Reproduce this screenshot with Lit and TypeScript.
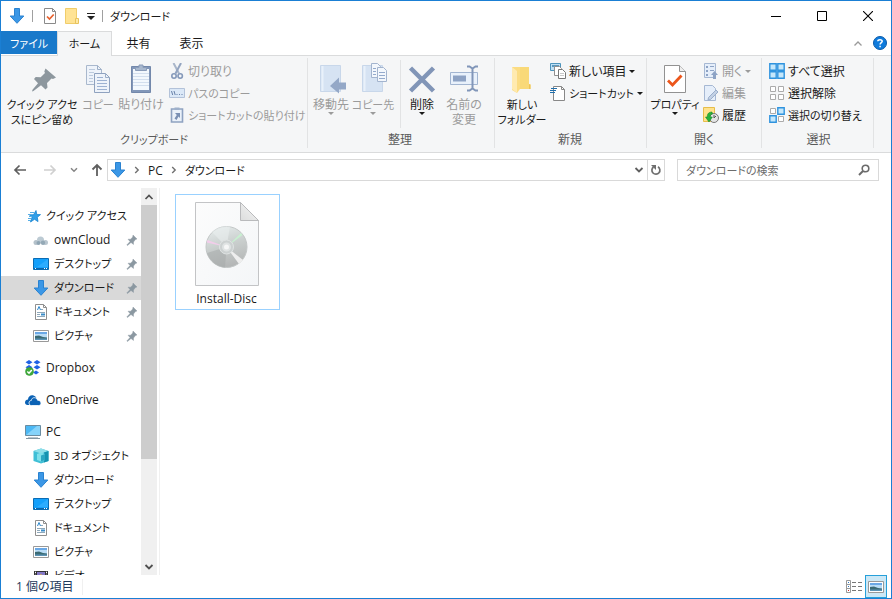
import { LitElement, html, css, svg, nothing, TemplateResult } from "lit";
import { customElement, property, state } from "lit/decorators.js";
import { classMap } from "lit/directives/class-map.js";
import { styleMap } from "lit/directives/style-map.js";

interface Glyph {
  w: number;
  h: number;
  body: TemplateResult;
}

const g = (w: number, h: number, body: TemplateResult): Glyph => ({ w, h, body });

const ICONS: Record<string, Glyph> = {
  down: g(16, 16, svg`<path d="M5.500.5h5v7.500h4.300L8 15.300 1.200 8h4.300z" fill="#3b97e6" stroke="#2a82d0"/>`),
  checkdoc: g(14, 16, svg`<path d="M1.500.5h8l3 3v12h-11z" fill="#fff" stroke="#8a8a8a"/><path d="M9.500.5v3h3" fill="none" stroke="#8a8a8a"/><path d="M4 8.500l2.500 2.500 4.200-4.500" fill="none" stroke="#e8602c" stroke-width="1.700"/>`),
  folder: g(14, 16, svg`<path d="M.5.5h11v10h1v5H.5z" fill="#ffe394" stroke="#f0cd6a"/><path d="M10.500 15.500v-5h3v5z" fill="#ffe9a6" stroke="#e8c35c"/>`),
  qat: g(8, 8, svg`<path d="M0 1h8v1H0zM0 4h8L4 8z" fill="#222"/>`),
  minimize: g(10, 10, svg`<path d="M0 5.500h10" stroke="#000"/>`),
  maximize: g(10, 10, svg`<path d="M.5.5h9v9h-9z" fill="none" stroke="#000"/>`),
  close: g(10, 10, svg`<path d="M0 0l10 10M10 0L0 10" stroke="#000" stroke-width="1.100"/>`),
  collapse: g(8, 5, svg`<path d="M.5 4.500L4 1l3.500 3.500" fill="none" stroke="#9a9a9a" stroke-width="1.300"/>`),
  help: g(14, 14, svg`<circle cx="7" cy="7" r="6.500" fill="#0f7bdc" stroke="#0b5aa8"/><path d="M4.800 5.300C4.900 3.300 9.200 3.200 9.200 5.300 9.200 6.600 7.100 6.800 7.100 8.500M7.100 9.700v1.600" fill="none" stroke="#fff" stroke-width="1.500"/>`),
  caret: g(6, 3, svg`<path d="M0 0h6L3 3z" fill="currentColor"/>`),
  pinBig: g(32, 32, svg`<path d="M20.500 4.500L31 13.500l-3 1.500-1.500-.5-4.500 4.500.5 4.500-2 2-4.500-4.300L8.500 27l-1.500.5.500-1.700 5.500-6.600L9 15l1.700-2 5 .3L20 9l-.7-1.500z" transform="translate(-1 1)" fill="#8d979e"/>`),
  copyBig: g(32, 32, svg`<g stroke="#a9b8cd" fill="#eef3fa"><path d="M4.500 2.500h11l4 4v15h-15z"/><path d="M12.500 10.500h11l4 4v15h-15z" stroke="#8fa2bf"/></g><path d="M15.500 2.500v4h4M23.500 10.500v4h4" fill="none" stroke="#9dafc8"/><path d="M7 6.500h6M7 9.500h5M7 12.500h4M7 15.500h4M7 18.500h4" stroke="#bccadd"/><path d="M15 14.500h6M15 17.500h10M15 20.500h10M15 23.500h10M15 26.500h10" stroke="#9db2d2"/>`),
  pasteBig: g(32, 32, svg`<path d="M6.500 3.500h19v26h-19z" fill="#8297b9" stroke="#7388ab"/><path d="M8 6h16v21H8z" fill="#f3f8fd"/><path d="M8 10.500h16M8 13.500h16M8 16.500h16M8 19.500h16M8 22.500h16" stroke="#d3dfee"/><path d="M10.500 7.500v-3h3.500V2h4v2.500h3.500v3z" fill="#a8b8ce" stroke="#8a9cb9"/>`),
  cut: g(16, 16, svg`<path d="M4.500 0L10 10.500" stroke="#a9b6ca" stroke-width="2"/><path d="M12 0L6.500 10.500" stroke="#93a4c0" stroke-width="2"/><circle cx="5" cy="13" r="2.200" fill="none" stroke="#8498b9" stroke-width="1.600"/><circle cx="11.200" cy="13" r="2.200" fill="none" stroke="#8498b9" stroke-width="1.600"/>`),
  path: g(16, 16, svg`<path d="M.5 3.500h15v9H.5z" fill="#dbe8f7" stroke="#b3c2d9"/><path d="M2.500 6l1.200 4M5 6l1.200 4" stroke="#6780a8"/><path d="M7.500 9h1v1h-1zM10 9h1v1h-1zM12.500 9h1v1h-1z" fill="#6780a8"/>`),
  pasteLink: g(16, 16, svg`<path d="M2.500 2h11v13h-11z" fill="#eaf1fa" stroke="#8ea2c1" stroke-width="1.600"/><path d="M5.500.5h5V3h-5z" fill="#9eb0ca"/><path d="M6 6h5v5L9.500 9.500 7.500 13 5.500 11.500 7.800 8z" fill="#7a90b4"/>`),
  moveBig: g(32, 32, svg`<path d="M5.500 2.500h20v26h-20z" fill="#d6e3f3" stroke="#c8d7ea"/><path d="M7.500 3v25" stroke="#e9f1fa" stroke-width="2"/><path d="M24 14.500l-9 8.500 9 7.500V26.500h7v-7h-7z" fill="#94a8c7"/>`),
  copyToBig: g(32, 32, svg`<path d="M5.500 2.500h20v26h-20z" fill="#d6e3f3" stroke="#c8d7ea"/><path d="M7.500 3v25" stroke="#e9f1fa" stroke-width="2"/><g fill="#f3f7fc" stroke="#a3b4ce"><path d="M14.500.5h6l3 3v11h-9z"/><path d="M20.500 4.500h6l3 3v11h-9z"/></g><path d="M16 5.500h3M16 8.500h3M16 11.500h3M22 9.500h6M22 12.500h6M22 15.500h6" stroke="#94aacc"/>`),
  deleteBig: g(32, 32, svg`<path d="M4.500 5l23 23M27.500 5l-23 23" stroke="#8195b7" stroke-width="4.500"/>`),
  renameBig: g(32, 32, svg`<path d="M2.500 9.500h27v12h-27z" fill="#e9f1fb" stroke="#a2b5d1"/><path d="M5 12.500h13v6H5z" fill="#8da2c4"/><path d="M19 3.500h2.500l3 2 3-2H30M24.500 5v21M19 27.500h2.500l3-2 3 2H30" fill="none" stroke="#8196b9" stroke-width="2"/>`),
  newFolderBig: g(32, 32, svg`<path d="M9 4h14v17h1.500v5H9z" fill="#f9d978"/><path d="M6 4h8v22l-3 4-5-3z" fill="#fbdc83"/><path d="M6 4l5 4v22l-5-4z" fill="#ffeab0"/><path d="M23 21l1.500 1v4H23z" fill="#edc356"/>`),
  newItem: g(16, 16, svg`<path d="M.5.5h10v7H.5z" fill="#bfe0f5" stroke="#4d94bd"/><path d="M2 2h7v2H2z" fill="#5b99bf"/><path d="M4.500 3.500h5l2 2v7h-7z" fill="#fff" stroke="#909090"/><path d="M8.500 6.500h4l3 3v6h-7z" fill="#fff" stroke="#777"/><path d="M10 10.500h4M10 12.500h4" stroke="#c9c9c9"/>`),
  shortcut: g(16, 16, svg`<path d="M3.500 1.500h8l3 3v11h-11z" fill="#fff" stroke="#888"/><path d="M11.500 1.500v3h3" fill="none" stroke="#888"/><path d="M1 3.500h6M0 5.500h6M0 7.500h5" stroke="#2170ad"/>`),
  propsBig: g(32, 32, svg`<path d="M5.500 2.500h15l6 6v21h-21z" fill="#fff" stroke="#929292"/><path d="M20.500 2.500v6h6" fill="#eee" stroke="#929292"/><path d="M9 17.500l4.500 4.500 9-9.500" fill="none" stroke="#ec561b" stroke-width="2.800"/>`),
  openSm: g(16, 16, svg`<path d="M1.500.5h11v14h-11z" fill="#e5eefa" stroke="#a6b8d3"/><path d="M3 3h2v2H3zM3 7h2v2H3zM3 11h2v2H3zM7 3h4v1H7zM7 7h4v1H7z" fill="#8da3c5"/><path d="M11.500 8l3.500 4h-2v4h-3v-4H8z" fill="#8da3c5"/>`),
  editSm: g(16, 16, svg`<path d="M1.500.5h8l3 3v12h-11z" fill="#e5eefa" stroke="#a6b8d3"/><path d="M13 5l2 2-7.500 7.500-2.500.5.500-2.500z" fill="#c2d0e4" stroke="#9aaecb"/>`),
  history: g(16, 16, svg`<path d="M.5.5h11v14H.5z" fill="#ffe28c" stroke="#e6bd4a"/><circle cx="11" cy="11" r="4.500" fill="#e4e4e4" stroke="#777"/><path d="M11 8v3l2-2" fill="none" stroke="#555"/><path d="M9 5C5 5 4 8 4.500 10H2.500l3.500 5 3.300-5H7.300C7 8 8 7 9.500 7z" fill="#27b43a" stroke="#168526" stroke-width=".6"/>`),
  selAll: g(16, 16, svg`<path d="M.8.8h6.400v6.400H.8zM8.800.8h6.400v6.400H8.800zM.8 8.800h6.400v6.400H.8zM8.800 8.800h6.400v6.400H8.800z" fill="#c5e7fb" stroke="#2f93de" stroke-width="1.400"/>`),
  selNone: g(16, 16, svg`<path d="M1.500 1.500h5v5h-5zM9.500 1.500h5v5h-5zM1.500 9.500h5v5h-5zM9.500 9.500h5v5h-5z" fill="#fff" stroke="#ababab"/>`),
  selInv: g(16, 16, svg`<path d="M8.800.8h6.400v6.400H8.800zM.8 8.800h6.400v6.400H.8z" fill="#c5e7fb" stroke="#2f93de" stroke-width="1.400"/><path d="M1.500 1.500h5v5h-5zM9.500 9.500h5v5h-5z" fill="#fff" stroke="#ababab"/>`),
  back: g(14, 12, svg`<path d="M13 6H2M6.500 1.500L2 6l4.500 4.500" fill="none" stroke="currentColor" stroke-width="1.700"/>`),
  forward: g(14, 12, svg`<path d="M1 6h11M7.500 1.500L12 6l-4.500 4.500" fill="none" stroke="currentColor" stroke-width="1.700"/>`),
  up: g(12, 14, svg`<path d="M6 13V2M1.500 6.500L6 2l4.500 4.500" fill="none" stroke="currentColor" stroke-width="1.800"/>`),
  chevDown: g(8, 6, svg`<path d="M1 1.200l3 3 3-3" fill="none" stroke="#858585" stroke-width="1.500"/>`),
  chevRight: g(6, 8, svg`<path d="M1.200 1l3 3-3 3" fill="none" stroke="#707070" stroke-width="1.400"/>`),
  chevUpBig: g(10, 6, svg`<path d="M1.500 5L5 1.500 8.500 5" fill="none" stroke="currentColor" stroke-width="1.700"/>`),
  chevDownBig: g(10, 6, svg`<path d="M1.500 1L5 4.500 8.500 1" fill="none" stroke="currentColor" stroke-width="1.800"/>`),
  refresh: g(12, 12, svg`<path d="M8 2.800A4 4 0 1 1 3.500 3" fill="none" stroke="#6f6f6f" stroke-width="1.700"/><path d="M1 1h5v5z" fill="#6f6f6f"/>`),
  search: g(12, 12, svg`<circle cx="7.500" cy="4.500" r="3.300" fill="none" stroke="#6b6b6b" stroke-width="1.600"/><path d="M5 7L1 11" stroke="#6b6b6b" stroke-width="2"/>`),
  star: g(16, 16, svg`<path d="M11 2.500l.8 4.100h3.700l-3.200 2.700.7 4.300L9.500 11.300 5.500 14l1.500-4.500L4.500 6.800h4z" fill="#2f9fe9" stroke="#1583cf" stroke-width=".8"/><path d="M5 4.500h4M3 6.500h3M4 8.500h3M3 10.500h3M3 12.500h3" stroke="#56aee6"/>`),
  cloud: g(16, 16, svg`<circle cx="3" cy="10.500" r="2.500" fill="#b4c1ca"/><circle cx="7.500" cy="8" r="3.500" fill="#bccad3"/><circle cx="12.500" cy="10.500" r="2.500" fill="#b9c6cf"/><circle cx="5.500" cy="11" r="2" fill="#8fa5b3"/><circle cx="10" cy="10.800" r="2.200" fill="#94a9b6"/>`),
  desktop: g(16, 16, svg`<path d="M.5 2.500h15v11H.5z" fill="#14a0fb" stroke="#0a6cb4"/><path d="M4 11L15 3v8z" fill="#2cacff"/><path d="M1 12h14v1H1z" fill="#0b66ad"/><path d="M2 12h1v1H2zM11 12h1v1h-1zM13 12h1v1h-1z" fill="#fff"/>`),
  doc: g(16, 16, svg`<path d="M2.500.5h8l3 3v12h-11z" fill="#fff" stroke="#8f8f8f"/><path d="M10.500.5v3h3" fill="none" stroke="#8f8f8f"/><path d="M4.500 6l1.500-3.500L7.500 6" fill="none" stroke="#2a86cc"/><path d="M8 5.500h2M4 8.500h8M4 10.500h3M4 12.500h8" stroke="#8fa8ba"/><path d="M8 9.500h4v2H8z" fill="#3a8cc8"/>`),
  picture: g(16, 16, svg`<path d="M.5 2.500h15v11H.5z" fill="#fff" stroke="#999"/><path d="M2 4h12v8H2z" fill="#b9dcf6"/><path d="M2 4h12v2H2z" fill="#6aa8e6"/><path d="M2 8l4-.5L10 9l4 .5V12H2z" fill="#3b6b74"/><path d="M2 10.500h12V12H2z" fill="#5b93b4"/>`),
  dropbox: g(16, 16, svg`<path d="M4 0l3.500 2.300L4 4.600.5 2.300zM12 0l3.500 2.300L12 4.600 8.500 2.300zM4 5l3.500 2.300L4 9.600.5 7.300zM12 5l3.500 2.300L12 9.600 8.500 7.300zM11 10.500l3 2-3 2-3-2z" fill="#1f62e6"/><circle cx="4.500" cy="11.500" r="4" fill="#3fab3b" stroke="#3a9a38" stroke-width=".6"/><path d="M2.300 11.500l1.700 1.700 2.800-3.200" fill="none" stroke="#fff" stroke-width="1.500"/>`),
  onedrive: g(16, 16, svg`<path d="M0 10.500C0 8.500 1.500 7.500 3 7.500 3 4.500 6 2.500 8.500 3.500 10 4 11 5 11.300 6L6 13H2.500C1 13 0 12 0 10.500z" fill="#0b62b5"/><path d="M4 11c0-1.500 1-2.500 2.300-2.500C6.500 6.500 8 5.500 9.800 5.700c1.500.2 2.500 1.300 2.700 2.500 2 0 3.500 1 3.500 3 0 1.300-1 2.300-2.500 2.300H6.300C5 13.500 4 12.500 4 11z" fill="#0b62b5" stroke="#fff" stroke-width=".8"/>`),
  pc: g(16, 16, svg`<path d="M.5 1.500h15v10H.5z" fill="#4cb8f4" stroke="#6a8ca1"/><path d="M1 11L12 2h3v9z" fill="#86d3fa"/><path d="M1 14.500h14" stroke="#8496a2"/><path d="M3 13.500h10" stroke="#b9c6ce"/>`),
  cube: g(16, 16, svg`<path d="M.5 3L8 .5 15.500 3v10L8 15.500.5 13z" fill="#3fbfd6"/><path d="M.5 3L8 .5 15.500 3 8 5.500z" fill="#8fdfe9"/><path d="M11 4.500L15.500 3v10L11 14.500z" fill="#1593b0"/><path d="M4 6l4-1.500L12 6v6l-4 1.500L4 12z" fill="#7fe0ea"/><path d="M8 7.500L12 6v6l-4 1.500z" fill="#2ba7c2"/>`),
  video: g(16, 16, svg`<path d="M1 3h14v12H1z" fill="#333"/><path d="M4 4h8v9H4z" fill="#8579c6"/><path d="M4 9l4-3 4 4v3H4z" fill="#e4b73e"/><path d="M2 4.500h1M2 7.500h1M2 10.500h1M13 4.500h1M13 7.500h1M13 10.500h1" stroke="#fff" stroke-width="1.500"/>`),
  pin: g(12, 12, svg`<path d="M7 1l4 4-1.500.5L7.500 8v2.500L5 8.500 1.500 11.500.8 11 4 7.500 2 5.200h2.600L6.700 3z" fill="#8b98a1" stroke="#8b98a1" stroke-width=".4"/>`),
  disc: g(64, 84, svg`
    <defs>
      <linearGradient id="paper" x1="0" y1="0" x2="1" y2="1"><stop offset="0" stop-color="#fcfcfc"/><stop offset="1" stop-color="#f4f6f8"/></linearGradient>
      <linearGradient id="fold" x1="0" y1="1" x2="1" y2="0"><stop offset="0" stop-color="#dcdddd"/><stop offset="1" stop-color="#f6f6f6"/></linearGradient>
      <linearGradient id="plate" x1=".2" y1="0" x2=".5" y2="1"><stop offset="0" stop-color="#e6ecec"/><stop offset=".5" stop-color="#c9cecd"/><stop offset="1" stop-color="#b4b6b6"/></linearGradient>
    </defs>
    <path d="M.5.5h45l18 18v65H.5z" fill="url(#paper)" stroke="#c3c4c6"/>
    <path d="M45.500.5v18h18z" fill="url(#fold)" stroke="#b9babc"/>
    <circle cx="31.500" cy="45" r="20.500" fill="url(#plate)" stroke="#c3c7c7"/>
    <path d="M31.500 45L17 30a21 21 0 0 1 18-5.500z" fill="#e9efee" opacity=".6"/>
    <path d="M31.500 45L46 31l1.500 2z" fill="#c8f0d0"/>
    <path d="M31.500 45L44 62l4-4z" fill="#eeeeee"/>
    <path d="M31.500 45L12.500 38l-.8 2.500z" fill="#f2cdea"/>
    <path d="M31.500 45L12 51a20.500 20.500 0 0 0 18 14.500z" fill="#a3a7a7" opacity=".5"/>
    <circle cx="31.500" cy="45" r="7" fill="#ccd1d1" stroke="#dfe3e3"/>
    <circle cx="31.500" cy="45" r="3.500" fill="#f6f7f7" stroke="#dfe3e3" stroke-width="2"/>`),
  details: g(16, 14, svg`<path d="M.5.5h4v4h-4zM.5 4.500h4v4h-4zM.5 8.500h4v4h-4z" fill="#fff" stroke="#999"/><path d="M2 2h1v1H2zM2 6h1v1H2z" fill="#2a78c4"/><path d="M2 10h1v1H2z" fill="#d42a2a"/><path d="M6 2.500h4M12 2.500h4M6 6.500h4M12 6.500h4M6 10.500h4M12 10.500h4" stroke="#777"/>`),
};

const icon = (name: string) => {
  const i = ICONS[name];
  return html`<svg class="icon" width=${i.w} height=${i.h} viewBox="0 0 ${i.w} ${i.h}" aria-hidden="true">${i.body}</svg>`;
};

interface Command {
  icon: string;
  lines: string[];
  size?: "xs" | "md" | "lg" | "xl";
  off?: boolean;
  menu?: boolean;
}

interface Group {
  id: string;
  label: string;
  large: Command[][];
  small: Command[];
}

const GROUPS: Group[] = [
  {
    id: "clipboard",
    label: "クリップボード",
    large: [[
      { icon: "pinBig", lines: ["クイック アクセ", "スにピン留め"], size: "xl" },
      { icon: "copyBig", lines: ["コピー"], off: true, size: "xs" },
      { icon: "pasteBig", lines: ["貼り付け"], off: true, size: "lg" },
    ]],
    small: [
      { icon: "cut", lines: ["切り取り"], off: true },
      { icon: "path", lines: ["パスのコピー"], off: true },
      { icon: "pasteLink", lines: ["ショートカットの貼り付け"], off: true },
    ],
  },
  {
    id: "organize",
    label: "整理",
    large: [
      [
        { icon: "moveBig", lines: ["移動先"], off: true, menu: true },
        { icon: "copyToBig", lines: ["コピー先"], off: true, menu: true },
      ],
      [
        { icon: "deleteBig", lines: ["削除"], menu: true },
        { icon: "renameBig", lines: ["名前の", "変更"], off: true },
      ],
    ],
    small: [],
  },
  {
    id: "create",
    label: "新規",
    large: [[{ icon: "newFolderBig", lines: ["新しい", "フォルダー"], size: "lg" }]],
    small: [
      { icon: "newItem", lines: ["新しい項目"], menu: true },
      { icon: "shortcut", lines: ["ショートカット"], menu: true },
    ],
  },
  {
    id: "open",
    label: "開く",
    large: [[{ icon: "propsBig", lines: ["プロパティ"], menu: true, size: "lg" }]],
    small: [
      { icon: "openSm", lines: ["開く"], off: true, menu: true },
      { icon: "editSm", lines: ["編集"], off: true },
      { icon: "history", lines: ["履歴"] },
    ],
  },
  {
    id: "select",
    label: "選択",
    large: [],
    small: [
      { icon: "selAll", lines: ["すべて選択"] },
      { icon: "selNone", lines: ["選択解除"] },
      { icon: "selInv", lines: ["選択の切り替え"] },
    ],
  },
];

interface Place {
  icon: string;
  name: string;
  pinned?: boolean;
  current?: boolean;
}

const PLACES: { root: Place; children: Place[] }[] = [
  {
    root: { icon: "star", name: "クイック アクセス" },
    children: [
      { icon: "cloud", name: "ownCloud", pinned: true },
      { icon: "desktop", name: "デスクトップ", pinned: true },
      { icon: "down", name: "ダウンロード", pinned: true, current: true },
      { icon: "doc", name: "ドキュメント", pinned: true },
      { icon: "picture", name: "ピクチャ", pinned: true },
    ],
  },
  { root: { icon: "dropbox", name: "Dropbox" }, children: [] },
  { root: { icon: "onedrive", name: "OneDrive" }, children: [] },
  {
    root: { icon: "pc", name: "PC" },
    children: [
      { icon: "cube", name: "3D オブジェクト" },
      { icon: "down", name: "ダウンロード" },
      { icon: "desktop", name: "デスクトップ" },
      { icon: "doc", name: "ドキュメント" },
      { icon: "picture", name: "ピクチャ" },
      { icon: "video", name: "ビデオ" },
    ],
  },
];

const kana = (s: string) => /[ァ-ヶ]{2}|の切/.test(s);

const base = css`
  * {
    box-sizing: border-box;
  }
  button,
  input {
    font: inherit;
    font-feature-settings: inherit;
    color: inherit;
    background: none;
    border: 0;
    padding: 0;
    margin: 0;
    white-space: nowrap;
  }
  a {
    color: inherit;
    text-decoration: none;
  }
  .icon {
    display: block;
    flex: none;
  }
  .kana {
    font-size: 11px;
  }
`;

@customElement("ribbon-bar")
export class RibbonBar extends LitElement {
  static styles = [
    base,
    css`
      :host {
        display: flex;
        flex: none;
        background: #f5f6f7;
        border-top: 1px solid #dadbdc;
        border-bottom: 1px solid #dadbdc;
        overflow: hidden;
      }
      .group {
        display: flex;
        flex-direction: column;
        flex: none;
        padding: 2px 4px 0;
        border-right: 1px solid #e2e3e4;
        margin: 2px 0 4px;
      }
      .clipboard { width: 307px; }
      .organize { width: 187px; padding-left: 2px; }
      .create { width: 152px; padding-left: 3px; }
      .open { width: 115px; }
      .select { width: 112px; padding-left: 6px; }
      .commands {
        display: flex;
        height: 72px;
      }
      .set {
        display: flex;
        margin-bottom: 4px;
      }
      .set + .set {
        border-left: 1px solid #e2e3e4;
        margin-left: 6px;
      }
      .large {
        display: flex;
        flex-direction: column;
        align-items: center;
        width: 42px;
        padding-top: 3px;
        line-height: 15px;
      }
      .xs { width: 38px; }
      .lg { width: 48px; }
      .xl { width: 74px; }
      .large .text {
        padding-top: 2px;
        text-align: center;
      }
      .small {
        display: flex;
        flex-direction: column;
        padding-left: 4px;
      }
      .select .small { padding-left: 1px; }
      .row {
        display: flex;
        align-items: center;
        gap: 3px;
        height: 22px;
      }
      .off {
        color: #9b9b9b;
      }
      .label {
        margin: 0;
        font-weight: normal;
        font-size: 12px;
        line-height: 16px;
        text-align: center;
        color: #5a5a5a;
      }
      .label.kana {
        font-size: 11px;
      }
    `,
  ];

  private large(c: Command) {
    return html`<button
      class="large ${c.size ?? "md"} ${c.off ? "off" : ""}"
      ?disabled=${!!c.off}
    >
      ${icon(c.icon)}
      <span class=${classMap({ text: true, kana: kana(c.lines.join("")) })}
        >${c.lines.map((l, i) => html`${i ? html`<br />` : nothing}${l}`)}</span
      >
      ${c.menu ? icon("caret") : nothing}
    </button>`;
  }

  private small(c: Command) {
    return html`<button class=${classMap({ row: true, off: !!c.off })} ?disabled=${!!c.off}>
      ${icon(c.icon)}<span class=${classMap({ kana: kana(c.lines[0]) })}>${c.lines[0]}</span>
      ${c.menu ? icon("caret") : nothing}
    </button>`;
  }

  render() {
    return GROUPS.map(
      (grp) => html`<section class="group ${grp.id}" aria-label=${grp.label}>
        <div class="commands">
          ${grp.large.map((s) => html`<div class="set">${s.map((c) => this.large(c))}</div>`)}
          ${grp.small.length
            ? html`<div class="small">${grp.small.map((c) => this.small(c))}</div>`
            : nothing}
        </div>
        <h2 class=${classMap({ label: true, kana: kana(grp.label) })}>${grp.label}</h2>
      </section>`
    );
  }
}

@customElement("nav-pane")
export class NavPane extends LitElement {
  @property({ type: Number }) visible = 0.72;

  static styles = [
    base,
    css`
      :host {
        display: flex;
        flex: none;
        width: 159px;
        min-height: 0;
        border-right: 1px solid #f0f0f0;
      }
      .tree {
        flex: 1;
        min-width: 0;
        overflow: hidden;
        padding-top: 16px;
      }
      ul {
        list-style: none;
        margin: 0 0 8px;
        padding: 0;
      }
      .place {
        display: flex;
        align-items: center;
        gap: 5px;
        height: 24px;
        padding: 0 3px 0 32px;
      }
      .root {
        padding-left: 24px;
      }
      .current {
        background: #d9d9d9;
      }
      .name {
        flex: 1;
        line-height: 16px;
        padding-bottom: 1px;
        white-space: nowrap;
      }
      .scroll {
        flex: none;
        display: flex;
        flex-direction: column;
        width: 16px;
        margin-right: 2px;
        background: #f0f0f0;
        color: #505050;
      }
      .step {
        display: flex;
        align-items: center;
        justify-content: center;
        height: 17px;
        flex: none;
      }
      .track {
        flex: 1;
        min-height: 0;
      }
      .thumb {
        background: #cdcdcd;
      }
    `,
  ];

  private place(p: Place, root = false) {
    return html`<li>
      <a class=${classMap({ place: true, root, current: !!p.current })} href="#">
        ${icon(p.icon)}<span class=${classMap({ name: true, kana: kana(p.name) })}>${p.name}</span>
        ${p.pinned ? icon("pin") : nothing}
      </a>
    </li>`;
  }

  render() {
    return html`
      <nav class="tree">
        ${PLACES.map(
          (s) => html`<ul>
            ${this.place(s.root, true)}${s.children.map((c) => this.place(c))}
          </ul>`
        )}
      </nav>
      <div class="scroll">
        <button class="step" aria-label="上へ">${icon("chevUpBig")}</button>
        <div class="track">
          <div class="thumb" style=${styleMap({ height: `${this.visible * 100}%` })}></div>
        </div>
        <button class="step" aria-label="下へ">${icon("chevDownBig")}</button>
      </div>
    `;
  }
}

@customElement("app-root")
export class AppRoot extends LitElement {
  @state() private query = "";

  static styles = [
    base,
    css`
      :host {
        display: flex;
        flex-direction: column;
        height: 100vh;
        box-sizing: border-box;
        border: 1px solid #1a7fd4;
        background: #fff;
        color: #1a1a1a;
        font: 12px "Open Sans", "Noto Sans CJK JP", sans-serif;
        font-feature-settings: "palt";
        overflow: hidden;
      }
      .titlebar {
        display: flex;
        align-items: center;
        height: 30px;
        flex: none;
        padding-left: 8px;
      }
      .bar {
        width: 1px;
        height: 12px;
        margin: 0 7px;
        background: #a0a0a0;
      }
      .quick {
        display: flex;
        align-items: center;
        gap: 8px;
        padding-left: 3px;
      }
      .title {
        flex: 1;
        margin: 0;
        font-weight: normal;
      }
      .win {
        display: flex;
        align-items: center;
        justify-content: center;
        width: 46px;
        height: 28px;
      }
      .tabs {
        display: flex;
        height: 24px;
        flex: none;
      }
      .tab {
        width: 53px;
        height: 23px;
        text-align: center;
      }
      .file {
        width: 56px;
        color: #fff;
        background: #1979ca;
      }
      .home {
        position: relative;
        width: 55px;
        height: 25px;
        padding-bottom: 2px;
        background: #f5f6f7;
        border: 1px solid #dadbdc;
        border-bottom: 0;
      }
      .tools {
        display: flex;
        align-items: center;
        gap: 11px;
        margin-left: auto;
        padding-right: 4px;
      }
      .address-row {
        display: flex;
        align-items: center;
        height: 34px;
        margin-bottom: 1px;
        flex: none;
        padding: 0 12px;
        color: #5f5f5f;
      }
      .history {
        display: flex;
        align-items: center;
        width: 94px;
        gap: 13px;
      }
      .history .fwd {
        color: #d0d0d0;
        padding-left: 3px;
      }
      .address {
        display: flex;
        flex: 1;
        align-items: center;
        height: 22px;
        border: 1px solid #d9d9d9;
        padding-left: 2px;
      }
      .crumbs {
        display: flex;
        flex: 1;
        align-items: center;
        gap: 8px;
      }
      .crumb {
        color: #1a1a1a;
      }
      .refresh {
        display: flex;
        align-items: center;
        justify-content: center;
        width: 17px;
        height: 20px;
        margin-left: 3px;
        border-left: 1px solid #d9d9d9;
      }
      .search {
        display: flex;
        align-items: center;
        flex: 0 1 202px;
        height: 22px;
        margin-left: 12px;
        padding: 0 8px;
        border: 1px solid #d9d9d9;
      }
      .search input {
        flex: 1;
        min-width: 0;
        outline: 0;
      }
      .search input::placeholder {
        color: #6d6d6d;
        opacity: 1;
      }
      .body {
        display: flex;
        flex: 1;
        min-height: 0;
      }
      .files {
        flex: 1;
        padding: 6px 15px;
      }
      .tile {
        display: flex;
        flex-direction: column;
        align-items: center;
        gap: 4px;
        width: 105px;
        padding: 7px 2px 1px 0;
        border: 1px solid #99d1ff;
        line-height: 18px;
      }
      .status {
        display: flex;
        align-items: center;
        height: 23px;
        flex: none;
        padding: 0 4px 0 15px;
        color: #1e395b;
      }
      .count {
        padding-right: 8px;
        border-right: 1px solid #f0f0f0;
        line-height: 16px;
      }
      .views {
        display: flex;
        margin-left: auto;
      }
      .view {
        display: flex;
        align-items: center;
        justify-content: center;
        width: 22px;
        height: 23px;
      }
      .chosen {
        background: #cce8f6;
        border: 1px solid #26a0da;
      }
    `,
  ];

  render() {
    return html`
      <header class="titlebar">
        ${icon("down")}<span class="bar"></span>
        <div class="quick">
          <button aria-label="プロパティ">${icon("checkdoc")}</button>
          <button aria-label="新しいフォルダー">${icon("folder")}</button>
          <button aria-label="カスタマイズ">${icon("qat")}</button>
        </div>
        <span class="bar"></span>
        <h1 class="title kana">ダウンロード</h1>
        <button class="win" aria-label="最小化">${icon("minimize")}</button>
        <button class="win" aria-label="最大化">${icon("maximize")}</button>
        <button class="win" aria-label="閉じる">${icon("close")}</button>
      </header>
      <div class="tabs">
        <button class="tab file kana">ファイル</button>
        <button class="tab home kana">ホーム</button>
        <button class="tab">共有</button>
        <button class="tab">表示</button>
        <div class="tools">
          <button aria-label="リボンの最小化">${icon("collapse")}</button>
          <button aria-label="ヘルプ">${icon("help")}</button>
        </div>
      </div>
      <ribbon-bar></ribbon-bar>
      <div class="address-row">
        <div class="history">
          <button aria-label="戻る">${icon("back")}</button>
          <button class="fwd" aria-label="進む">${icon("forward")}</button>
          <button aria-label="最近表示した場所">${icon("chevDown")}</button>
          <button aria-label="上へ">${icon("up")}</button>
        </div>
        <div class="address">
          <div class="crumbs">
            ${icon("down")}${icon("chevRight")}
            <button class="crumb">PC</button>
            ${icon("chevRight")}
            <button class="crumb kana">ダウンロード</button>
          </div>
          <button aria-label="以前の場所">${icon("chevDownBig")}</button>
          <button class="refresh" aria-label="最新の情報に更新">${icon("refresh")}</button>
        </div>
        <label class="search">
          <input
            class="kana"
            type="text"
            aria-label="ダウンロードの検索"
            placeholder="ダウンロードの検索"
            .value=${this.query}
            @input=${(e: Event) => (this.query = (e.target as HTMLInputElement).value)}
          />
          ${icon("search")}
        </label>
      </div>
      <div class="body">
        <nav-pane></nav-pane>
        <main class="files">
          <button class="tile">${icon("disc")}<span>Install-Disc</span></button>
        </main>
      </div>
      <footer class="status">
        <span class="count">1 個の項目</span>
        <div class="views">
          <button class="view" aria-label="詳細">${icon("details")}</button>
          <button class="view chosen" aria-label="大アイコン">${icon("picture")}</button>
        </div>
      </footer>
    `;
  }
}
